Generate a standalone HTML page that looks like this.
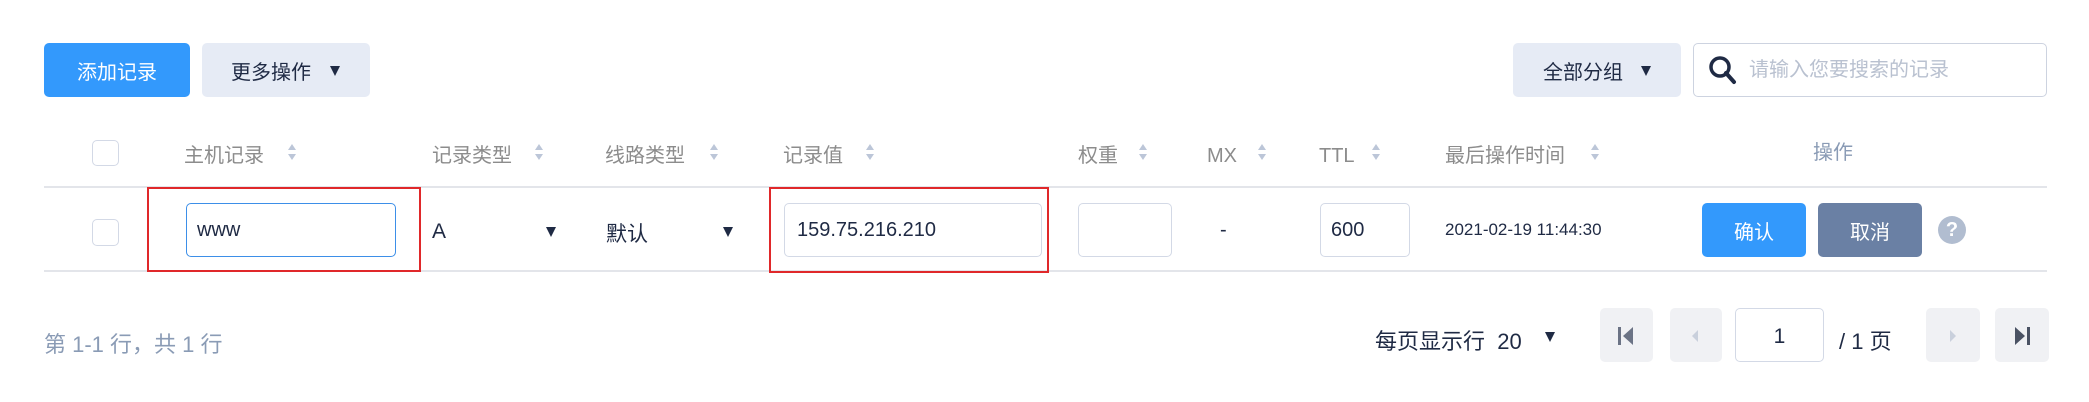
<!DOCTYPE html>
<html><head><meta charset="utf-8"><style>
*{margin:0;padding:0;box-sizing:border-box}
body{width:2089px;height:402px;background:#fff;position:relative;overflow:hidden;font-family:"Liberation Sans","Noto Sans CJK SC",sans-serif;color:#1f2a44}
.a{position:absolute}
.btn{position:absolute;border-radius:5px;display:flex;align-items:center;justify-content:center;font-size:20px}
.h{position:absolute;top:144px;font-size:20px;color:#8c8c8c;line-height:24px}
.s{position:absolute;top:142px;width:10px;height:22px}
.inp{position:absolute;border:1px solid #d3d9e6;border-radius:5px;background:#fff;font-size:20px;display:flex;align-items:center}
.tri{position:absolute;width:0;height:0;border-left:5px solid transparent;border-right:5px solid transparent;border-top:10px solid #1f2a44}
.pg{position:absolute;top:308px;height:54px;background:#f0f1f4;border-radius:5px}
.hl{position:absolute;left:44px;width:2003px;height:2px;background:#e3e5ea}
.red{position:absolute;border:2px solid #e0282a}
</style></head><body>
<div class="btn" style="left:44px;top:43px;width:146px;height:54px;background:#3399fc;color:#fff">添加记录</div>
<div class="btn" style="left:202px;top:43px;width:168px;height:54px;background:#e6ebf5;justify-content:flex-start;padding-left:29px">更多操作</div>
<div class="tri" style="left:330px;top:66px"></div>
<div class="btn" style="left:1513px;top:43px;width:168px;height:54px;background:#e6ebf5;justify-content:flex-start;padding-left:30px">全部分组</div>
<div class="tri" style="left:1641px;top:66px"></div>
<div class="a" style="left:1693px;top:43px;width:354px;height:54px;border:1px solid #cdd3e0;border-radius:5px"></div>
<svg class="a" style="left:1708px;top:55px" width="30" height="30" viewBox="0 0 30 30"><circle cx="12" cy="12" r="9" fill="none" stroke="#1f2a44" stroke-width="3.5"/><path d="M18 18 L26 27" stroke="#1f2a44" stroke-width="4" stroke-linecap="round"/></svg>
<div class="a" style="left:1749px;top:57px;font-size:20px;color:#b9c1d0;line-height:26px">请输入您要搜索的记录</div>

<div class="a" style="left:92px;top:140px;width:27px;height:26px;border:1px solid #d3d9e6;border-radius:5px"></div>
<div class="h" style="left:184px">主机记录</div>
<div class="h" style="left:432px">记录类型</div>
<div class="h" style="left:605px">线路类型</div>
<div class="h" style="left:783px">记录值</div>
<div class="h" style="left:1078px">权重</div>
<div class="h" style="left:1207px">MX</div>
<div class="h" style="left:1319px">TTL</div>
<div class="h" style="left:1445px">最后操作时间</div>
<div class="h" style="left:1813px;top:141px;color:#8a9bb5">操作</div>
<svg width="0" height="0" style="position:absolute"><defs><g id="st"><path d="M1 8 L5 2 L9 8Z M1 12 L5 18 L9 12Z" fill="#bcc6d8"/></g></defs></svg>
<svg class="s" style="left:287px" viewBox="0 0 10 22"><use href="#st"/></svg>
<svg class="s" style="left:534px" viewBox="0 0 10 22"><use href="#st"/></svg>
<svg class="s" style="left:709px" viewBox="0 0 10 22"><use href="#st"/></svg>
<svg class="s" style="left:865px" viewBox="0 0 10 22"><use href="#st"/></svg>
<svg class="s" style="left:1138px" viewBox="0 0 10 22"><use href="#st"/></svg>
<svg class="s" style="left:1257px" viewBox="0 0 10 22"><use href="#st"/></svg>
<svg class="s" style="left:1371px" viewBox="0 0 10 22"><use href="#st"/></svg>
<svg class="s" style="left:1590px" viewBox="0 0 10 22"><use href="#st"/></svg>

<div class="hl" style="top:186px"></div>
<div class="hl" style="top:270px"></div>

<div class="a" style="left:92px;top:219px;width:27px;height:27px;border:1px solid #d3d9e6;border-radius:5px"></div>
<div class="red" style="left:147px;top:187px;width:274px;height:85px"></div>
<div class="inp" style="left:186px;top:203px;width:210px;height:54px;border-color:#3d8fe8;padding-left:10px">www</div>
<div class="a" style="left:432px;top:220px;font-size:21px">A</div>
<div class="tri" style="left:546px;top:227px"></div>
<div class="a" style="left:606px;top:218px;font-size:21px">默认</div>
<div class="tri" style="left:723px;top:227px"></div>
<div class="red" style="left:769px;top:187px;width:280px;height:86px"></div>
<div class="inp" style="left:784px;top:203px;width:258px;height:54px;padding-left:12px">159.75.216.210</div>
<div class="inp" style="left:1078px;top:203px;width:94px;height:54px"></div>
<div class="a" style="left:1220px;top:219px;font-size:20px">-</div>
<div class="inp" style="left:1320px;top:203px;width:90px;height:54px;padding-left:10px">600</div>
<div class="a" style="left:1445px;top:220px;font-size:17px">2021-02-19 11:44:30</div>
<div class="btn" style="left:1702px;top:203px;width:104px;height:54px;background:#3399fc;color:#fff">确认</div>
<div class="btn" style="left:1818px;top:203px;width:104px;height:54px;background:#6a80a4;color:#fff">取消</div>
<div class="a" style="left:1938px;top:216px;width:28px;height:28px;border-radius:50%;background:#b1bdd0;color:#fff;font-size:20px;font-weight:bold;text-align:center;line-height:28px">?</div>

<div class="a" style="left:44px;top:327px;font-size:22px;color:#8a9bb5">第 1-1 行，共 1 行</div>
<div class="a" style="left:1375px;top:324px;font-size:22px">每页显示行&nbsp; 20</div>
<div class="tri" style="left:1545px;top:332px"></div>
<div class="pg" style="left:1600px;width:53px"></div>
<svg class="a" style="left:1615px;top:325px" width="22" height="22"><rect x="3" y="2" width="3" height="18" fill="#6b7385"/><path d="M18 2 L8 11 L18 20Z" fill="#6b7385"/></svg>
<div class="pg" style="left:1670px;width:52px"></div>
<svg class="a" style="left:1688px;top:328px" width="14" height="16"><path d="M10 2 L4 8 L10 14Z" fill="#c9d0dc"/></svg>
<div class="a" style="left:1735px;top:308px;width:89px;height:54px;border:1px solid #d3d9e6;border-radius:5px;font-size:21px;text-align:center;line-height:56px">1</div>
<div class="a" style="left:1839px;top:324px;font-size:22px">/ 1 页</div>
<div class="pg" style="left:1926px;width:54px"></div>
<svg class="a" style="left:1946px;top:328px" width="14" height="16"><path d="M4 2 L10 8 L4 14Z" fill="#c9d0dc"/></svg>
<div class="pg" style="left:1995px;width:54px"></div>
<svg class="a" style="left:2011px;top:325px" width="22" height="22"><path d="M4 2 L14 11 L4 20Z" fill="#4a5263"/><rect x="16" y="2" width="3" height="18" fill="#4a5263"/></svg>
</body></html>
